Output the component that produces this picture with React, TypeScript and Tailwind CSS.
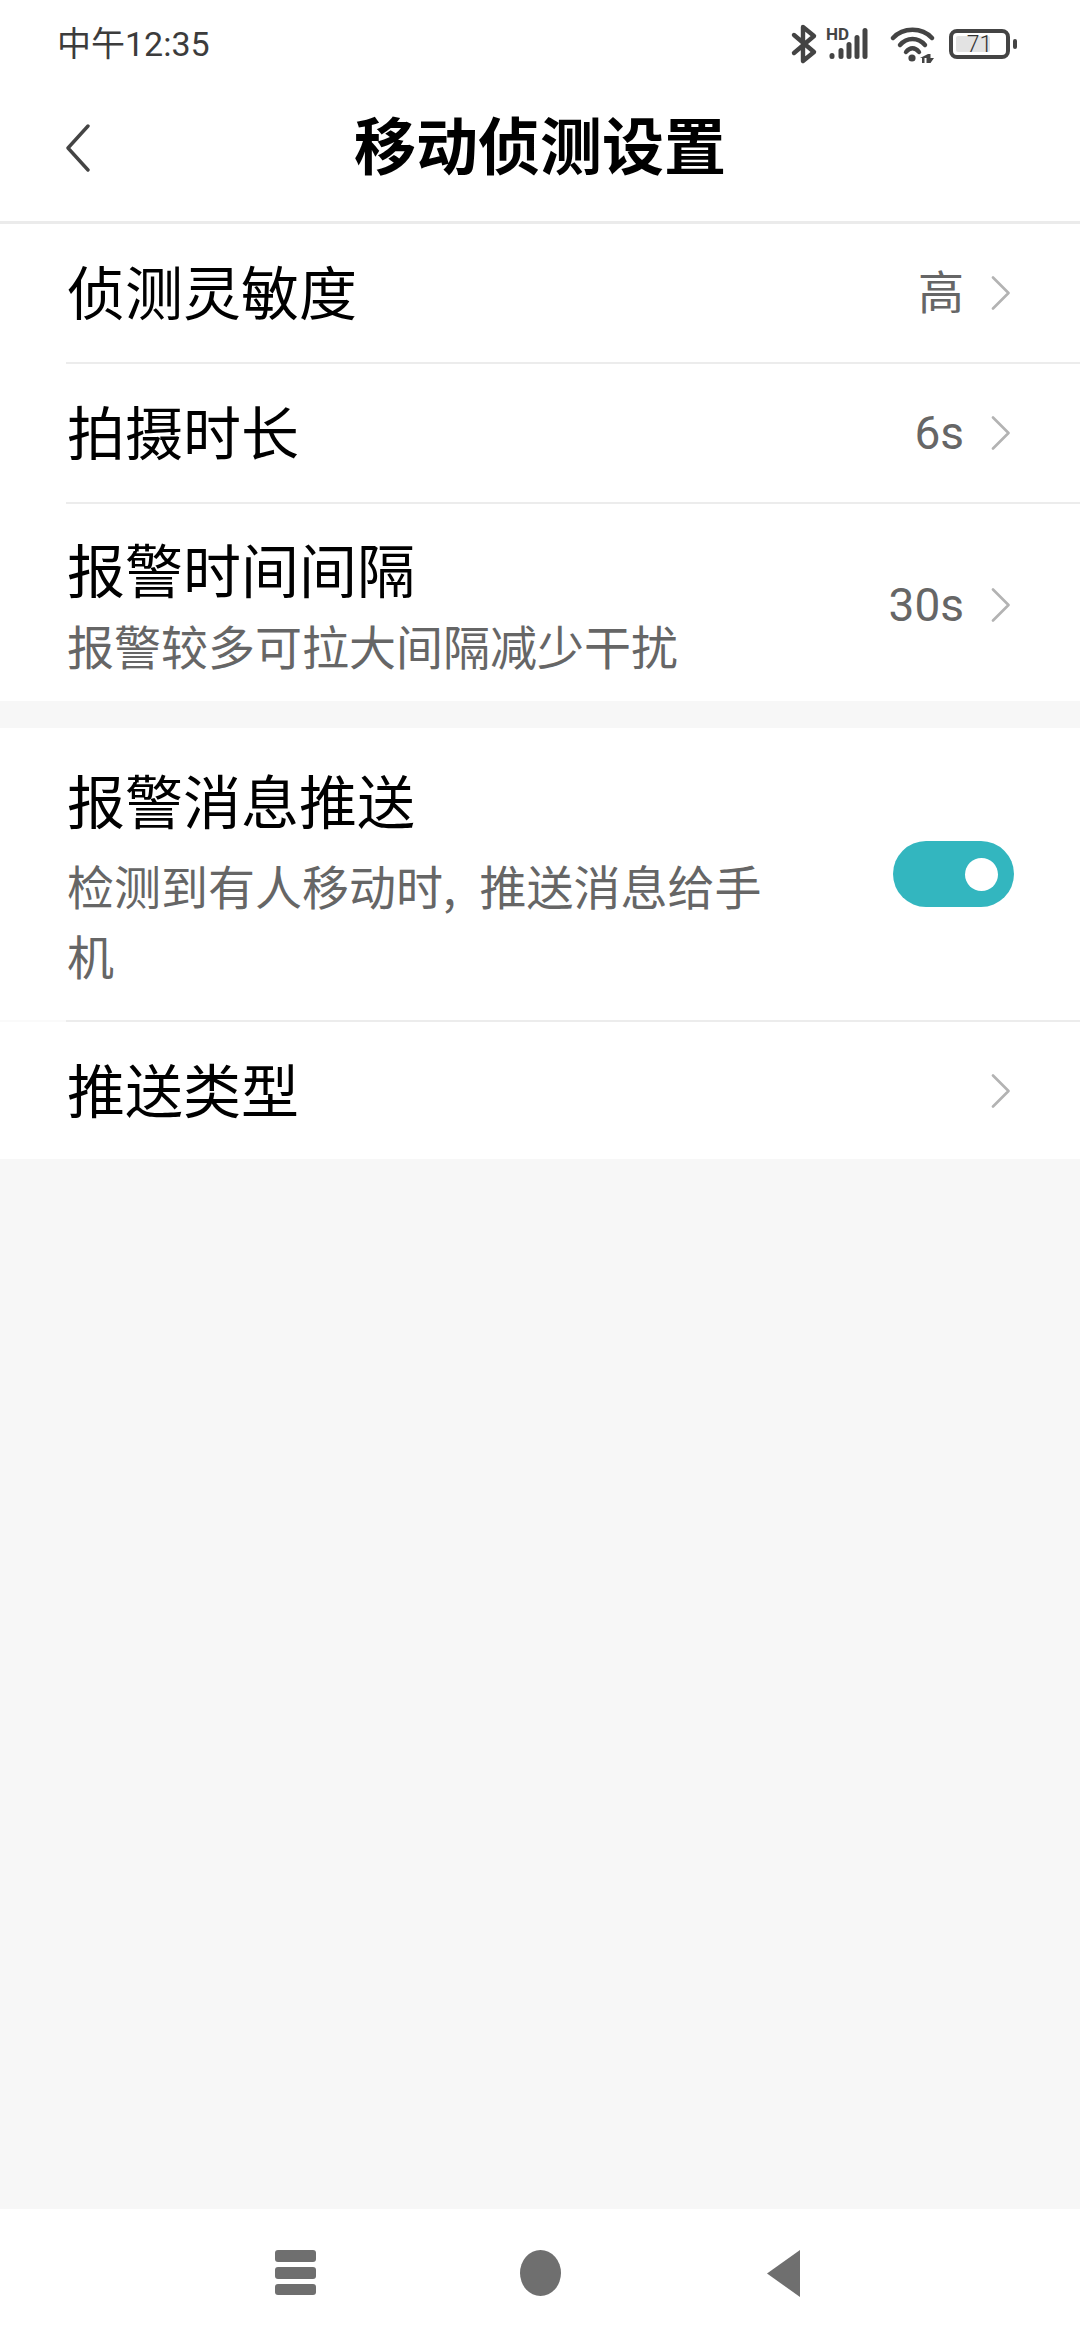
import React from "react";

const cjk = "font-['Noto_Sans_CJK_SC','Noto_Sans',sans-serif]";
const latin = "font-['Roboto','Noto_Sans_CJK_SC',sans-serif]";

const Chevron = () => (
  <svg width="20" height="34" viewBox="0 0 20 34" fill="none" className="shrink-0">
    <path d="M2 1.5 L17.5 17 L2 32.5" stroke="#b3b3b3" strokeWidth="2.6" strokeLinecap="round" strokeLinejoin="round" />
  </svg>
);

const StatusIcons = () => (
  <svg width="145" height="50" viewBox="0 0 145 50" fill="none">
    <g transform="translate(0 1)">
      {/* bluetooth */}
      <path d="M4 15 L24 32 L13 41 V7 L24 16 L4 33" stroke="#444" strokeWidth="4.4" strokeLinecap="round" strokeLinejoin="round" />
      {/* hd + signal */}
      <text x="36" y="20" fontSize="17" fontWeight="700" fill="#444" fontFamily="Roboto, sans-serif">HD</text>
      <rect x="39.5" y="33" width="5" height="6" rx="2.5" fill="#444" />
      <rect x="48.5" y="28" width="5" height="11" rx="2.5" fill="#444" />
      <rect x="56.5" y="22" width="5" height="17" rx="2.5" fill="#444" />
      <rect x="64.5" y="15" width="5" height="24" rx="2.5" fill="#444" />
      <rect x="72.5" y="8" width="5" height="31" rx="2.5" fill="#444" />
      {/* wifi */}
      <path d="M103 18 C113 7 132 7 142 18" stroke="#444" strokeWidth="4.4" strokeLinecap="round" />
      <path d="M110 25 C117 17 128 17 135 25" stroke="#444" strokeWidth="4.4" strokeLinecap="round" />
      <path d="M116 32 C120 27 125 27 129 32" stroke="#444" strokeWidth="4.4" strokeLinecap="round" />
      <circle cx="122" cy="38" r="3.6" fill="#444" />
      <path d="M130 38 H136.5 V43 H138 V34 H140.5 V38 H144 L140.5 43 H138 V34 M132 38 V43 H134.5 V38 Z" fill="#444" />
    </g>
  </svg>
);

const Battery = () => (
  <div className="flex items-center gap-[3px]">
    <div className="relative flex h-[30px] w-[61px] items-center justify-center rounded-[8px] border-[4px] border-[#444]">
      <div className="absolute left-[3px] top-[3px] bottom-[3px] w-[34px] rounded-[2px] bg-[#e3e3e3]" />
      <span className="relative font-['Roboto',sans-serif] text-[23px] font-light leading-none text-[#333]">71</span>
    </div>
    <div className="h-[10px] w-[4px] rounded-full bg-[#444]" />
  </div>
);

const Divider = () => <div className="ml-[66px] h-[2px] bg-[#ececec]" />;

type RowProps = { title: string; sub?: string; value?: string; h: string };

const Row = ({ title, sub, value, h }: RowProps) => (
  <div className={`flex items-center pl-[67px] pr-[69px] ${h}`}>
    <div className={sub ? "flex-1" : "flex-1 pb-[6px]"}>
      <div className="text-[58px] leading-[74px] text-black">{title}</div>
      {sub && <div className="mt-[5px] text-[47px] leading-[70px] text-[#666]">{sub}</div>}
    </div>
    {value && <span className={`mr-[27px] text-[46px] text-[#666] ${latin}`}>{value}</span>}
    <Chevron />
  </div>
);

export default function App() {
  return (
    <div className={`flex h-[2340px] w-[1080px] flex-col bg-[#f7f7f7] ${cjk}`}>
      <div className="bg-white">
        <div className="flex h-[90px] items-center justify-between pb-[2px] pl-[57px] pr-[63px]">
          <span className={`text-[34px] text-[#3c3c3c] ${latin}`}>中午12:35</span>
          <div className="flex items-center gap-[14px]">
            <StatusIcons />
            <Battery />
          </div>
        </div>
        <div className="relative flex h-[131px] items-center justify-center pb-[26px]">
          <svg width="26" height="48" viewBox="0 0 26 48" fill="none" className="absolute left-[65px] top-[34px]">
            <path d="M23 2 L3 24 L23 46" stroke="#444" strokeWidth="3.4" strokeLinecap="round" strokeLinejoin="round" />
          </svg>
          <h1 className="text-[62px] font-bold leading-none text-black">移动侦测设置</h1>
        </div>
      </div>

      <div className="h-[3px] bg-[#ebebeb]" />

      <div className="bg-white">
        <Row title="侦测灵敏度" value="高" h="h-[138px]" />
        <Divider />
        <Row title="拍摄时长" value="6s" h="h-[138px]" />
        <Divider />
        <Row title="报警时间间隔" sub="报警较多可拉大间隔减少干扰" value="30s" h="h-[197px] pt-[5px]" />
      </div>

      <div className="mt-[27px] bg-white">
        <div className="flex h-[292px] items-center pl-[67px] pr-[66px] pt-[3px]">
          <div className="w-[700px]">
            <div className="text-[58px] leading-[74px] text-black">报警消息推送</div>
            <div className="mt-[14px] text-[47px] leading-[70px] text-[#666]">
              {"检测到有人移动时,\u2002推送消息给手机"}
            </div>
          </div>
          <div className="ml-auto mt-[110px] flex h-[66px] w-[121px] items-center justify-end self-start rounded-full bg-[#33b6bf] pr-[16px]">
            <div className="h-[33px] w-[33px] rounded-full bg-white" />
          </div>
        </div>
        <div className="h-[2px] bg-[#fafafa]">
          <div className="ml-[66px] h-full bg-[#ececec]" />
        </div>
        <Row title="推送类型" h="h-[137px]" />
      </div>

      <div className="flex-1" />

      <div className="flex h-[131px] items-start bg-white pl-[275px] pt-[41px]">
        <div className="flex w-[41px] flex-col gap-[5px]">
          <div className="h-[12px] rounded-[3px] bg-[#6f6f6f]" />
          <div className="h-[12px] rounded-[3px] bg-[#6f6f6f]" />
          <div className="h-[11px] rounded-[3px] bg-[#6f6f6f]" />
        </div>
        <svg width="41" height="46" viewBox="0 0 41 46" className="ml-[204px]">
          <ellipse cx="20.5" cy="23" rx="20.5" ry="23" fill="#6f6f6f" />
        </svg>
        <svg width="33" height="47" viewBox="0 0 33 47" className="ml-[206px]">
          <path d="M0 23.5 L33 0 V47 Z" fill="#6f6f6f" />
        </svg>
      </div>
    </div>
  );
}
